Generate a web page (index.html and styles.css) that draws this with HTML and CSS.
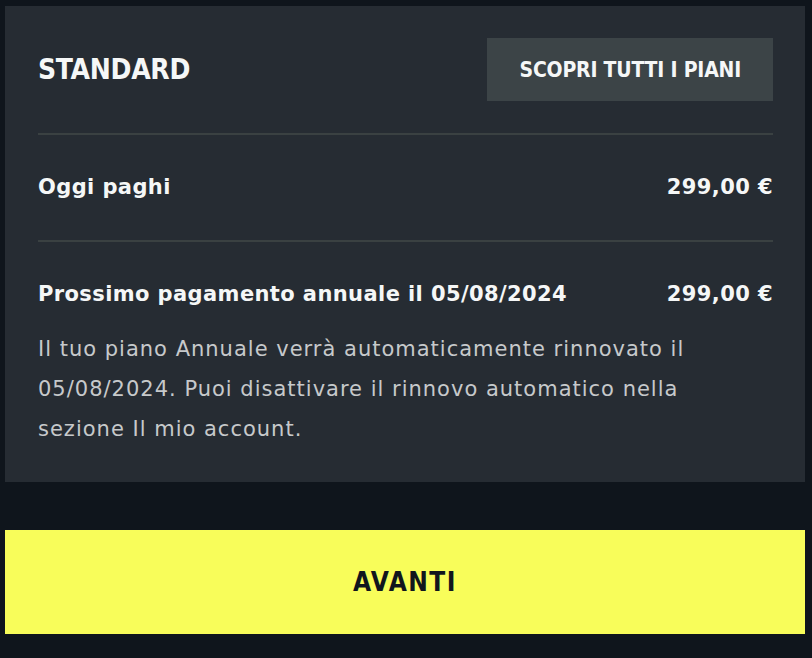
FILE: index.html
```html
<!DOCTYPE html>
<html lang="it">
<head>
    <meta charset="UTF-8">
    <meta name="viewport" content="width=device-width, initial-scale=1.0">
    <title>Riepilogo piano</title>
    <link rel="stylesheet" href="styles.css">
</head>
<body>
    <div class="summary">
        <div class="plan-head">
            <div class="plan-name">STANDARD</div>
            <button class="plans-button">SCOPRI TUTTI I PIANI</button>
        </div>

        <div class="price-row">
            <span>Oggi paghi</span>
            <span class="amount">299,00 €</span>
        </div>

        <div class="price-row last">
            <span>Prossimo pagamento annuale il 05/08/2024</span>
            <span class="amount">299,00 €</span>
        </div>

        <p class="renew-note">
            Il tuo piano Annuale verrà automaticamente rinnovato il 05/08/2024. Puoi disattivare il rinnovo automatico nella sezione Il mio account.
        </p>
    </div>

    <button class="next-button">AVANTI</button>
</body>
</html>
```

FILE: styles.css
```css
:root {
    --background: #0f151c;
    --card: #262c33;
    --line: #3a4142;
    --button: #3c4447;
    --text: #f5f7f7;
    --muted: #c6c9cb;
    --accent: #f8fd5a;
}

body {
    margin: 0;
    background: var(--background);
    font-family: 'DejaVu Sans', sans-serif;
    color: var(--text);
    padding: 6px 7px 0 5px;
}

.summary {
    background: var(--card);
    padding: 32px 32px 33px 33px;
}

.plan-head {
    display: flex;
    justify-content: space-between;
    align-items: center;
    padding-bottom: 32px;
    border-bottom: 2px solid var(--line);
}

.plan-name {
    font-size: 28px;
    font-weight: bold;
    font-stretch: condensed;
    letter-spacing: -0.3px;
}

.plans-button {
    background: var(--button);
    color: var(--text);
    border: none;
    height: 63px;
    padding: 0 32px;
    font-family: inherit;
    font-stretch: condensed;
    font-size: 21px;
    font-weight: bold;
    letter-spacing: -0.2px;
}

.price-row {
    display: flex;
    justify-content: space-between;
    align-items: center;
    padding: 40px 0 41px;
    font-size: 21px;
    line-height: 24px;
    font-weight: bold;
    letter-spacing: 0.4px;
    border-bottom: 2px solid var(--line);
}

.price-row.last {
    border-bottom: none;
    padding-bottom: 0;
}

.renew-note {
    max-width: 700px;
    margin: 23px 0 0;
    font-size: 21px;
    line-height: 40px;
    letter-spacing: 1px;
    color: var(--muted);
}

.next-button {
    display: block;
    width: 100%;
    margin-top: 48px;
    height: 104px;
    border: none;
    background: var(--accent);
    color: #11161d;
    font-family: inherit;
    font-stretch: condensed;
    font-size: 26px;
    font-weight: bold;
    letter-spacing: 1.5px;
}
```
